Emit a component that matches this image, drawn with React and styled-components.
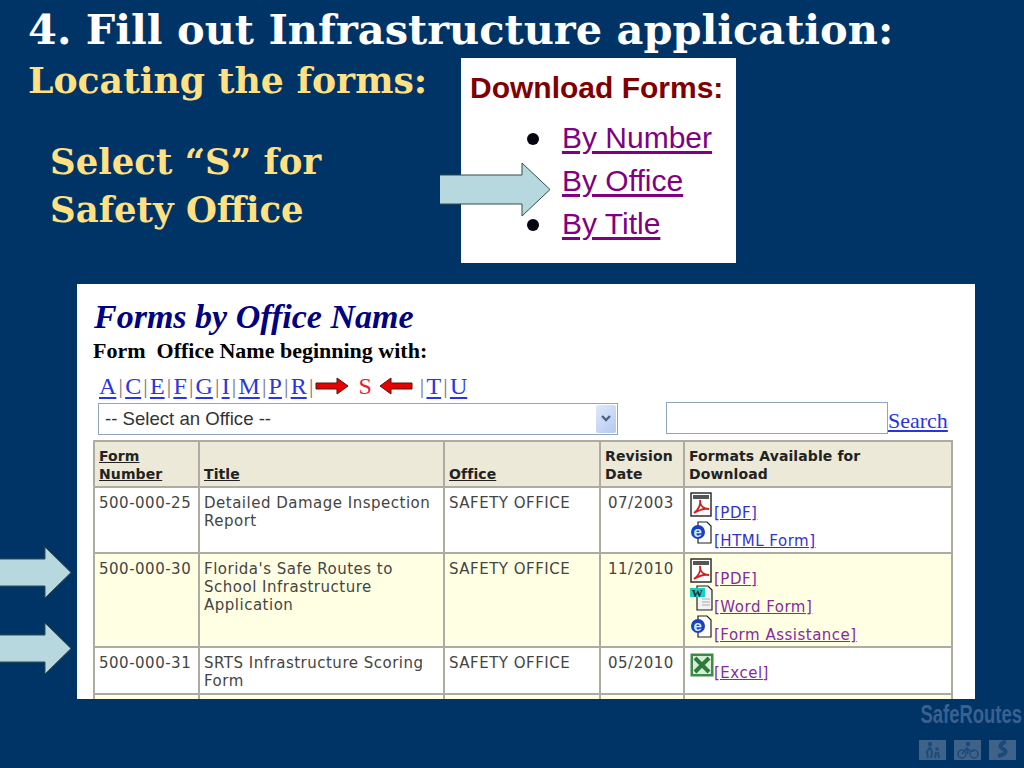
import React from 'react';
import styled, { createGlobalStyle } from 'styled-components';

const GlobalStyle = createGlobalStyle`
  html, body { margin: 0; padding: 0; background: #003366; }
`;

const Slide = styled.div`
  position: relative;
  width: 1024px;
  height: 768px;
  overflow: hidden;
  background: #003366;
  font-family: "Liberation Serif", serif;
`;

const Title = styled.h1`
  margin: 0;
  height: 58px;
  padding-left: 28px;
  box-sizing: border-box;
  color: #fff;
  font-family: "DejaVu Serif", serif;
  font-size: 41.5px;
  line-height: 60px;
  font-weight: bold;
  white-space: nowrap;
`;

const TopRow = styled.div`
  display: flex;
  height: 205px;
`;

const Intro = styled.div`
  width: 461px;
  padding-left: 28px;
  box-sizing: border-box;
  color: #ffe183;
  font-family: "DejaVu Serif", serif;
  font-weight: bold;
`;

const SubTitle = styled.h2`
  margin: 0;
  font-size: 36.2px;
  line-height: 46px;
`;

const Callout = styled.p`
  margin: 34px 0 0 22px;
  font-size: 35.5px;
  line-height: 48px;
`;

const DownloadBox = styled.div`
  width: 275px;
  background: #fff;
  padding: 13px 0 0 9px;
  box-sizing: border-box;
  font-family: "Liberation Sans", Arial, sans-serif;
`;

const DownloadTitle = styled.div`
  color: #800000;
  font-size: 30px;
  font-weight: bold;
  line-height: 34px;
`;

const FormLinks = styled.ul`
  list-style: none;
  margin: 13px 0 0;
  padding: 0 0 0 92px;
`;

const FormLink = styled.li`
  position: relative;
  height: 43px;
  color: #800080;
  font-size: 30px;
  line-height: 40px;
  span {
    text-decoration: underline;
    text-decoration-thickness: 3px;
    text-underline-offset: 3px;
  }
  &::before {
    content: "";
    position: absolute;
    left: -35px;
    top: 15px;
    width: 12px;
    height: 12px;
    border-radius: 50%;
    background: #05050f;
  }
`;

const Panel = styled.div`
  width: 898px;
  height: 415px;
  margin: 21px 0 0 77px;
  padding: 14px 23px 0 17px;
  box-sizing: border-box;
  background: #fff;
  overflow: hidden;
`;

const PanelTitle = styled.div`
  color: #000080;
  font-size: 34px;
  font-weight: bold;
  font-style: italic;
  line-height: 38px;
`;

const PanelSub = styled.div`
  color: #000;
  font-size: 22px;
  font-weight: bold;
  line-height: 28px;
  margin: 1px 0 0 -1px;
  white-space: pre;
`;

const LetterRow = styled.div`
  display: flex;
  align-items: center;
  height: 36px;
  margin: 3px 0 0 5px;
  font-size: 24px;
  color: #777;
`;

const Letter = styled.a`
  color: #2a35dd;
  text-decoration: underline;
  text-underline-offset: 3px;
`;

const Pipe = styled.span`
  margin: 0 2.2px 0 ${({ $left }) => $left ?? 2.2}px;
  font-size: 22px;
`;

const Current = styled.span`
  color: #e8202a;
  margin: 0 7px 0 9px;
`;

const FormControls = styled.div`
  display: flex;
  align-items: flex-start;
  margin: -1px 0 0 4px;
`;

const SelectBox = styled.div`
  display: flex;
  align-items: center;
  justify-content: space-between;
  width: 520px;
  height: 32px;
  box-sizing: border-box;
  border: 1px solid #8fa6bd;
  padding: 0 1px 0 6px;
  font-family: "Liberation Sans", Arial, sans-serif;
  font-size: 18.6px;
  color: #333;
`;

const SelectButton = styled.div`
  display: flex;
  align-items: center;
  justify-content: center;
  width: 20px;
  height: 28px;
  border-radius: 2px;
  background: linear-gradient(135deg, #dfe9fb, #b4c9f0);
`;

const SearchInput = styled.input`
  width: 222px;
  height: 32px;
  box-sizing: border-box;
  margin: -1px 0 0 48px;
  padding: 0;
  border: 1px solid #8fa6bd;
  background: #fff;
`;

const SearchLink = styled.a`
  color: #2a35dd;
  font-size: 22px;
  line-height: 36px;
  text-decoration: underline;
`;

const Table = styled.table`
  width: 858px;
  table-layout: fixed;
  border-collapse: collapse;
  margin: 1px 0 0 -1px;
  font-family: "DejaVu Sans", Verdana, sans-serif;
  font-size: 15px;
  letter-spacing: 0.5px;
  line-height: 18px;
  color: #444;
  th, td {
    border: 2px solid #aeaca2;
    padding: 6px 4px 0;
    box-sizing: border-box;
    vertical-align: top;
    text-align: left;
  }
  th {
    vertical-align: bottom;
    padding: 5px 4px 3px;
    background: #ece9d8;
    color: #222;
    font-size: 14px;
    letter-spacing: 0.1px;
    font-weight: bold;
  }
`;

const Row = styled.tr`
  height: ${({ $h }) => $h}px;
  background: ${({ $tint }) => ($tint ? '#ffffe3' : '#fff')};
`;

const DateCell = styled.td`
  && { padding-left: 7px; padding-right: 0; }
`;

const HeadLink = styled.span`
  text-decoration: underline;
`;

const Format = styled.div`
  display: flex;
  align-items: flex-end;
  height: 28px;
  margin-left: 1px;
  &:first-child { margin-top: -1px; }
  svg { margin-bottom: 4px; flex: none; }
`;

const FormatLink = styled.a`
  color: ${({ $visited }) => ($visited ? '#8a2a9a' : '#3333cc')};
  text-decoration: underline;
  line-height: 16px;
`;

const Arrow = styled.svg`
  position: absolute;
  left: ${({ $x }) => $x}px;
  top: ${({ $y }) => $y}px;
`;

const Logo = styled.div`
  position: absolute;
  right: 2px;
  bottom: 8px;
  width: 106px;
  color: #3a6090;
  font-family: "Liberation Sans", Arial, sans-serif;
`;

const LogoName = styled.div`
  width: 150px;
  margin-left: -44px;
  font-size: 26px;
  font-weight: bold;
  line-height: 26px;
  white-space: nowrap;
  text-align: right;
  transform: scaleX(0.71);
  transform-origin: right center;
`;

const LogoIcons = styled.div`
  display: flex;
  justify-content: flex-end;
  gap: 8px;
  margin-top: 13px;
  padding-right: 6px;
`;

const LogoTile = styled.div`
  display: flex;
  align-items: center;
  justify-content: center;
  width: 27px;
  height: 20px;
  background: #3f6288;
`;

const BlockArrow = ({ x, y, w, h, body, head }) => (
  <Arrow $x={x} $y={y} width={w} height={h} viewBox={`0 0 ${w} ${h}`}>
    <polygon
      points={`-2,${body} ${head},${body} ${head},1 ${w - 1},${h / 2} ${head},${h - 1} ${head},${h - body} -2,${h - body}`}
      fill="#b7d8de"
      stroke="#2f4f4f"
      strokeWidth="1"
    />
  </Arrow>
);

const RedArrow = ({ flip }) => (
  <svg width="34" height="20" viewBox="0 0 34 20" style={flip ? { transform: 'scaleX(-1)' } : undefined}>
    <path d="M1 7h21V2l11 8-11 8v-5H1z" fill="#e80000" stroke="#5a1010" strokeWidth="1" />
  </svg>
);

const PdfIcon = () => (
  <svg width="24" height="25" viewBox="0 0 24 25">
    <rect x="1" y="1" width="20" height="23" fill="#fff" stroke="#222" strokeWidth="1.4" />
    <rect x="3" y="3" width="16" height="4" fill="#555" />
    <path d="M4 21c4-3 7-8 6-13 0 5 3 9 9 9-5-1-10 1-15 4z" fill="none" stroke="#d02020" strokeWidth="1.8" />
  </svg>
);

const IeIcon = () => (
  <svg width="24" height="24" viewBox="0 0 24 24">
    <path d="M8 1h9l4 4v17H8z" fill="#fff" stroke="#222" strokeWidth="1.2" />
    <circle cx="8" cy="11" r="7" fill="#1a3fc0" />
    <text x="8" y="16" textAnchor="middle" fontSize="15" fontWeight="bold" fontFamily="Liberation Sans" fill="#cfeaff">e</text>
  </svg>
);

const WordIcon = () => (
  <svg width="24" height="26" viewBox="0 0 24 26">
    <path d="M7 1h11l4 4v20H7z" fill="#f2f2f2" stroke="#222" strokeWidth="1.2" />
    <path d="M12 14h8M12 17h8M12 20h8" stroke="#aaa" />
    <rect x="0" y="3" width="15" height="9" fill="#18d0c0" />
    <text x="7.5" y="11.5" textAnchor="middle" fontSize="11" fontWeight="bold" fontFamily="Liberation Serif" fill="#123">W</text>
  </svg>
);

const ExcelIcon = () => (
  <svg width="24" height="24" viewBox="0 0 24 24">
    <rect x="0.5" y="0.5" width="23" height="23" fill="#3d8a4a" />
    <rect x="3" y="3" width="18" height="18" fill="#d8ecd8" />
    <path d="M5 5l14 14M19 5L5 19" stroke="#2d7a3a" strokeWidth="4" />
  </svg>
);

const rows = [
  {
    number: '500-000-25',
    title: 'Detailed Damage Inspection Report',
    date: '07/2003',
    h: 66,
    formats: [
      { icon: <PdfIcon />, label: '[PDF]' },
      { icon: <IeIcon />, label: '[HTML Form]' },
    ],
  },
  {
    number: '500-000-30',
    title: "Florida's Safe Routes to School Infrastructure Application",
    date: '11/2010',
    h: 94,
    tint: true,
    formats: [
      { icon: <PdfIcon />, label: '[PDF]', visited: true },
      { icon: <WordIcon />, label: '[Word Form]', visited: true },
      { icon: <IeIcon />, label: '[Form Assistance]', visited: true },
    ],
  },
  {
    number: '500-000-31',
    title: 'SRTS Infrastructure Scoring Form',
    date: '05/2010',
    h: 47,
    formats: [{ icon: <ExcelIcon />, label: '[Excel]', visited: true }],
  },
];

const letters1 = ['A', 'C', 'E', 'F', 'G', 'I', 'M', 'P', 'R'];

export default function App() {
  return (
    <Slide>
      <GlobalStyle />
      <Title>4. Fill out Infrastructure application:</Title>
      <TopRow>
        <Intro>
          <SubTitle>Locating the forms:</SubTitle>
          <Callout>
            Select “S” for
            <br />
            Safety Office
          </Callout>
        </Intro>
        <DownloadBox>
          <DownloadTitle>Download Forms:</DownloadTitle>
          <FormLinks>
            <FormLink><span>By Number</span></FormLink>
            <FormLink><span>By Office</span></FormLink>
            <FormLink><span>By Title</span></FormLink>
          </FormLinks>
        </DownloadBox>
      </TopRow>
      <Panel>
        <PanelTitle>Forms by Office Name</PanelTitle>
        <PanelSub>Form  Office Name beginning with:</PanelSub>
        <LetterRow>
          {letters1.map((l) => (
            <React.Fragment key={l}>
              <Letter>{l}</Letter>
              <Pipe>|</Pipe>
            </React.Fragment>
          ))}
          <RedArrow />
          <Current>S</Current>
          <RedArrow flip />
          <Pipe $left={7}>|</Pipe>
          <Letter>T</Letter>
          <Pipe>|</Pipe>
          <Letter>U</Letter>
        </LetterRow>
        <FormControls>
          <SelectBox>
            -- Select an Office --
            <SelectButton>
              <svg width="12" height="10" viewBox="0 0 12 10">
                <path d="M2 2l4 4 4-4" fill="none" stroke="#4d6185" strokeWidth="2.4" />
              </svg>
            </SelectButton>
          </SelectBox>
          <SearchInput />
          <SearchLink>Search</SearchLink>
        </FormControls>
        <Table>
          <colgroup>
            <col style={{ width: 105 }} />
            <col style={{ width: 245 }} />
            <col style={{ width: 156 }} />
            <col style={{ width: 84 }} />
            <col style={{ width: 268 }} />
          </colgroup>
          <thead>
            <tr>
              <th><HeadLink>Form Number</HeadLink></th>
              <th><HeadLink>Title</HeadLink></th>
              <th><HeadLink>Office</HeadLink></th>
              <th>Revision Date</th>
              <th>Formats Available for<br />Download</th>
            </tr>
          </thead>
          <tbody>
            {rows.map((r) => (
              <Row key={r.number} $h={r.h} $tint={r.tint}>
                <td>{r.number}</td>
                <td>{r.title}</td>
                <td>SAFETY OFFICE</td>
                <DateCell>{r.date}</DateCell>
                <td>
                  {r.formats.map((f) => (
                    <Format key={f.label}>
                      {f.icon}
                      <FormatLink $visited={f.visited}>{f.label}</FormatLink>
                    </Format>
                  ))}
                </td>
              </Row>
            ))}
            <Row $h={20} $tint>
              <td /><td /><td /><td /><td />
            </Row>
          </tbody>
        </Table>
      </Panel>
      <BlockArrow x={440} y={162} w={111} h={55} body={13} head={82} />
      <BlockArrow x={0} y={546} w={72} h={53} body={13} head={45} />
      <BlockArrow x={0} y={622} w={72} h={53} body={13} head={45} />
      <Logo>
        <LogoName>SafeRoutes</LogoName>
        <LogoIcons>
          <LogoTile>
            <svg width="20" height="18" viewBox="0 0 20 18">
              <circle cx="7" cy="3" r="2.2" fill="#1d4a7c" />
              <circle cx="14" cy="8" r="1.8" fill="#1d4a7c" />
              <path d="M7 6l-3 5 1 6M7 6l2 5-1 6M13 11l-1 6M15 11l1 6" fill="none" stroke="#1d4a7c" strokeWidth="2" />
            </svg>
          </LogoTile>
          <LogoTile>
            <svg width="22" height="18" viewBox="0 0 22 18">
              <circle cx="11" cy="3" r="2.2" fill="#1d4a7c" />
              <circle cx="5" cy="13" r="4" fill="none" stroke="#1d4a7c" strokeWidth="1.5" />
              <circle cx="17" cy="13" r="4" fill="none" stroke="#1d4a7c" strokeWidth="1.5" />
              <path d="M5 13l5-6 3 3h4M10 7l1 6" fill="none" stroke="#1d4a7c" strokeWidth="1.6" />
            </svg>
          </LogoTile>
          <LogoTile>
            <svg width="18" height="20" viewBox="0 0 18 20">
              <path d="M12 2C6 3 5 7 9 9s4 5-5 7" fill="none" stroke="#1d4a7c" strokeWidth="4" />
            </svg>
          </LogoTile>
        </LogoIcons>
      </Logo>
    </Slide>
  );
}
